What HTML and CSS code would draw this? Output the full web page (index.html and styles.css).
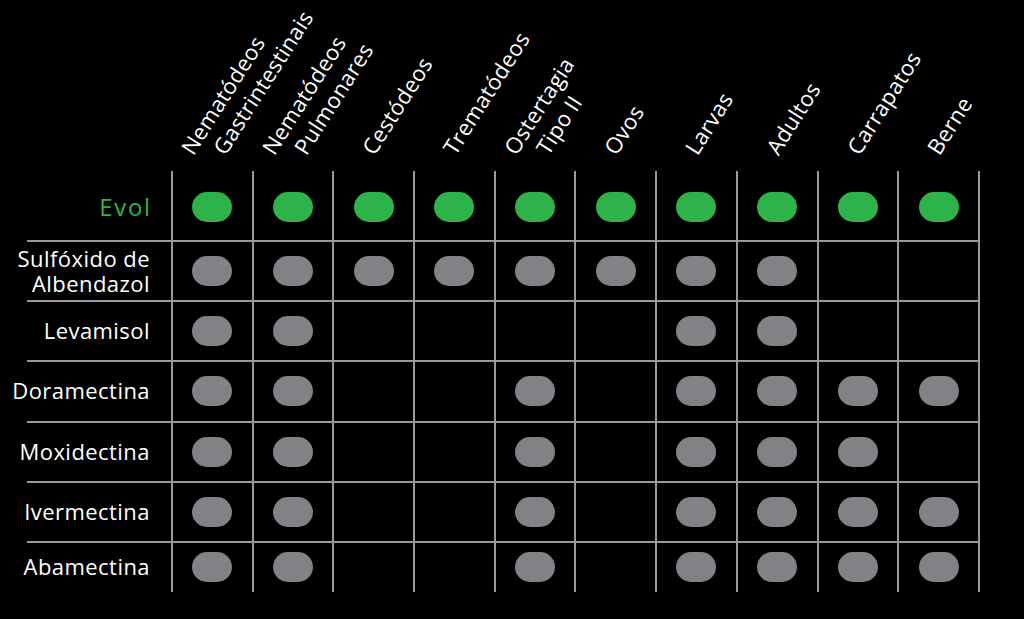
FILE: index.html
```html
<!DOCTYPE html>
<html lang="pt">
<head>
<meta charset="utf-8">
<title>Comparativo Evol</title>
<link rel="stylesheet" href="styles.css">
</head>
<body>
<div class="table">
  <div class="row head">
    <div class="label"></div>
    <div class="hcell double"><span class="hl">Nematódeos</span><span class="hl">Gastrintestinais</span></div>
    <div class="hcell double"><span class="hl">Nematódeos</span><span class="hl">Pulmonares</span></div>
    <div class="hcell"><span class="hl">Cestódeos</span></div>
    <div class="hcell"><span class="hl">Trematódeos</span></div>
    <div class="hcell double"><span class="hl">Ostertagia</span><span class="hl">Tipo II</span></div>
    <div class="hcell"><span class="hl">Ovos</span></div>
    <div class="hcell"><span class="hl">Larvas</span></div>
    <div class="hcell"><span class="hl">Adultos</span></div>
    <div class="hcell"><span class="hl">Carrapatos</span></div>
    <div class="hcell"><span class="hl">Berne</span></div>
  </div>

  <div class="row body evol">
    <div class="label"><span class="evol-text">Evol</span></div>
    <div class="cell"><span class="pill green"></span></div>
    <div class="cell"><span class="pill green"></span></div>
    <div class="cell"><span class="pill green"></span></div>
    <div class="cell"><span class="pill green"></span></div>
    <div class="cell"><span class="pill green"></span></div>
    <div class="cell"><span class="pill green"></span></div>
    <div class="cell"><span class="pill green"></span></div>
    <div class="cell"><span class="pill green"></span></div>
    <div class="cell"><span class="pill green"></span></div>
    <div class="cell"><span class="pill green"></span></div>
  </div>

  <div class="row body">
    <div class="label"><span class="ltext two">Sulfóxido de<br>Albendazol</span></div>
    <div class="cell"><span class="pill"></span></div>
    <div class="cell"><span class="pill"></span></div>
    <div class="cell"><span class="pill"></span></div>
    <div class="cell"><span class="pill"></span></div>
    <div class="cell"><span class="pill"></span></div>
    <div class="cell"><span class="pill"></span></div>
    <div class="cell"><span class="pill"></span></div>
    <div class="cell"><span class="pill"></span></div>
    <div class="cell"></div>
    <div class="cell"></div>
  </div>

  <div class="row body">
    <div class="label"><span class="ltext">Levamisol</span></div>
    <div class="cell"><span class="pill"></span></div>
    <div class="cell"><span class="pill"></span></div>
    <div class="cell"></div>
    <div class="cell"></div>
    <div class="cell"></div>
    <div class="cell"></div>
    <div class="cell"><span class="pill"></span></div>
    <div class="cell"><span class="pill"></span></div>
    <div class="cell"></div>
    <div class="cell"></div>
  </div>

  <div class="row body">
    <div class="label"><span class="ltext">Doramectina</span></div>
    <div class="cell"><span class="pill"></span></div>
    <div class="cell"><span class="pill"></span></div>
    <div class="cell"></div>
    <div class="cell"></div>
    <div class="cell"><span class="pill"></span></div>
    <div class="cell"></div>
    <div class="cell"><span class="pill"></span></div>
    <div class="cell"><span class="pill"></span></div>
    <div class="cell"><span class="pill"></span></div>
    <div class="cell"><span class="pill"></span></div>
  </div>

  <div class="row body">
    <div class="label"><span class="ltext">Moxidectina</span></div>
    <div class="cell"><span class="pill"></span></div>
    <div class="cell"><span class="pill"></span></div>
    <div class="cell"></div>
    <div class="cell"></div>
    <div class="cell"><span class="pill"></span></div>
    <div class="cell"></div>
    <div class="cell"><span class="pill"></span></div>
    <div class="cell"><span class="pill"></span></div>
    <div class="cell"><span class="pill"></span></div>
    <div class="cell"></div>
  </div>

  <div class="row body">
    <div class="label"><span class="ltext">Ivermectina</span></div>
    <div class="cell"><span class="pill"></span></div>
    <div class="cell"><span class="pill"></span></div>
    <div class="cell"></div>
    <div class="cell"></div>
    <div class="cell"><span class="pill"></span></div>
    <div class="cell"></div>
    <div class="cell"><span class="pill"></span></div>
    <div class="cell"><span class="pill"></span></div>
    <div class="cell"><span class="pill"></span></div>
    <div class="cell"><span class="pill"></span></div>
  </div>

  <div class="row body last">
    <div class="label"><span class="ltext">Abamectina</span></div>
    <div class="cell"><span class="pill"></span></div>
    <div class="cell"><span class="pill"></span></div>
    <div class="cell"></div>
    <div class="cell"></div>
    <div class="cell"><span class="pill"></span></div>
    <div class="cell"></div>
    <div class="cell"><span class="pill"></span></div>
    <div class="cell"><span class="pill"></span></div>
    <div class="cell"><span class="pill"></span></div>
    <div class="cell"><span class="pill"></span></div>
  </div>
</div>
</body>
</html>
```

FILE: styles.css
```css
* {
  box-sizing: border-box;
}

html, body {
  margin: 0;
  padding: 0;
  background: #000;
}

body {
  width: 1024px;
  height: 619px;
  overflow: hidden;
  font-family: "Open Sans", "Liberation Sans", sans-serif;
  color: #fff;
}

.table {
  display: flex;
  flex-direction: column;
  padding-left: 27px;
}

.row {
  display: grid;
  grid-template-columns: 144px repeat(10, 80.7px);
  width: 953px;
}

.row.head {
  height: 171px;
}

.row.body {
  height: 60.2px;
  border-bottom: 2px solid #9a9a9a;
  border-right: 2px solid #9a9a9a;
}

.row.evol {
  height: 71px;
}

.row.last {
  height: 49px;
  border-bottom: none;
}

.label {
  display: flex;
  align-items: center;
  justify-content: flex-end;
  padding-right: 21px;
  min-width: 0;
}

.ltext {
  font-size: 22px;
  line-height: 26px;
  letter-spacing: 0.45px;
  white-space: nowrap;
  text-align: right;
  flex-shrink: 0;
  margin-bottom: 2px;
}

.ltext.two {
  line-height: 25px;
  margin-bottom: 0;
}

.evol-text {
  font-size: 24px;
  line-height: 28px;
  letter-spacing: 1.6px;
  margin-right: -1.6px;
  color: #2eb34b;
  white-space: nowrap;
  padding-top: 2px;
}

.cell {
  border-left: 2px solid #9a9a9a;
  display: flex;
  align-items: center;
  justify-content: center;
}

.evol .cell {
  padding-top: 3px;
}

.pill {
  display: block;
  width: 40px;
  height: 30px;
  border-radius: 15px;
  background: #818285;
}

.pill.green {
  background: #2db34a;
}

/* rotated column headers */
.hcell {
  display: flex;
  align-items: flex-end;
  gap: 32px;
  padding: 0 0 13px 45px;
}

.hcell.double {
  padding-left: 25px;
}

.hl {
  display: block;
  width: 0;
  height: 24px;
  line-height: 24px;
  font-size: 22px;
  letter-spacing: 0.3px;
  white-space: nowrap;
  transform-origin: 0 100%;
  transform: rotate(-57.5deg);
}
```
